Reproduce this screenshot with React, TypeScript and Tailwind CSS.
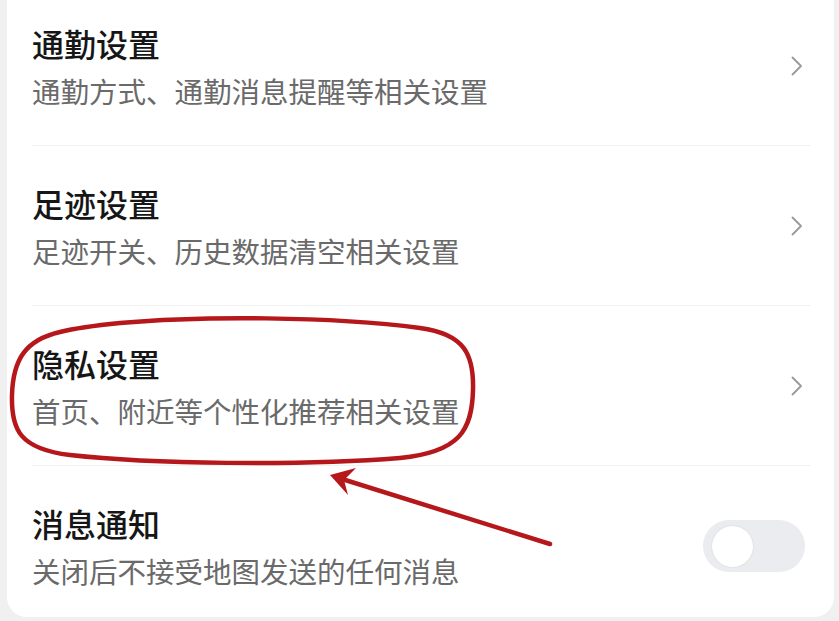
import React from "react";

const font = { fontFamily: '"Noto Sans CJK SC", "Noto Sans", sans-serif' };

function Chevron() {
  return (
    <svg width="14" height="22" viewBox="0 0 14 22" fill="none">
      <path d="M2.5 2.5 L11 11 L2.5 19.5" stroke="#999999" strokeWidth="1.8" strokeLinecap="round" strokeLinejoin="round" />
    </svg>
  );
}

function Toggle() {
  return (
    <div className="w-[102px] h-[52px] rounded-full bg-[#eaecef] flex items-center pl-[9px]">
      <div className="w-[41px] h-[41px] rounded-full bg-white shadow-[0_0_2px_rgba(0,0,0,0.12)]" />
    </div>
  );
}

function Row({ title, sub, last, right }: { title: string; sub: string; last?: boolean; right: React.ReactNode }) {
  return (
    <div className={"h-[160px] flex items-center " + (last ? "" : "border-b border-[#f1f1f1]")}>
      <div className="flex-1 flex flex-col pt-[2px]">
        <div className="text-[32px] leading-[40px] font-medium text-[#161616]">{title}</div>
        <div className="text-[28.5px] leading-[40px] mt-[8px] text-[#6a6a6a]">{sub}</div>
      </div>
      {right}
    </div>
  );
}

export default function App() {
  return (
    <div className="relative w-[839px] h-[621px] overflow-hidden bg-[#f0f0f0] pl-[7px] pr-[5px]" style={font}>
      <div className="mt-[-14px] h-[631px] overflow-hidden bg-white rounded-b-[20px] pl-[25px] pr-[23px]">
        <Row title="通勤设置" sub="通勤方式、通勤消息提醒等相关设置" right={<div className="pr-[7px]"><Chevron /></div>} />
        <Row title="足迹设置" sub="足迹开关、历史数据清空相关设置" right={<div className="pr-[7px]"><Chevron /></div>} />
        <Row title="隐私设置" sub="首页、附近等个性化推荐相关设置" right={<div className="pr-[7px]"><Chevron /></div>} />
        <Row title="消息通知" sub="关闭后不接受地图发送的任何消息" last right={<div className="pr-[6px]"><Toggle /></div>} />
      </div>
      <svg className="absolute inset-0 pointer-events-none" width="839" height="621" viewBox="0 0 839 621" fill="none">
        <path
          d="M 120 323 C 200 316, 330 316, 420 328 C 465 334, 474 355, 473 390 C 472 430, 460 452, 400 458 C 300 466, 150 464, 70 455 C 20 449, 11 430, 12 395 C 13 360, 25 340, 60 332 C 80 327, 100 325, 120 323 Z"
          stroke="#b5171b"
          strokeWidth="4.5"
        />
        <line x1="550" y1="544" x2="342" y2="479" stroke="#b5171b" strokeWidth="4.5" strokeLinecap="round" />
        <polygon points="330,475 356,468 344,480 348,495" fill="#b5171b" />
      </svg>
    </div>
  );
}
